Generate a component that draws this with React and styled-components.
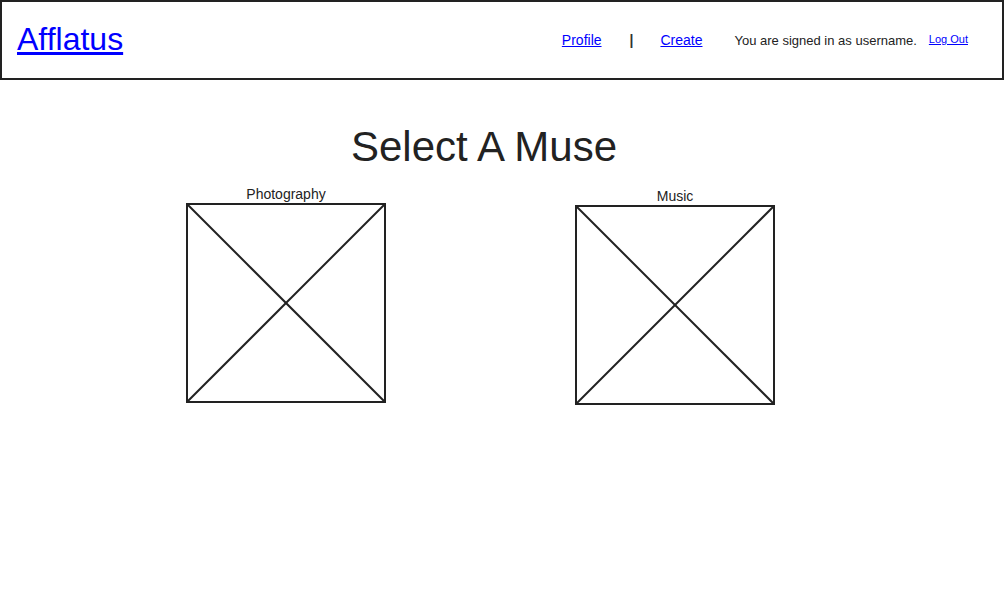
import React from 'react';
import styled, { createGlobalStyle } from 'styled-components';

const Global = createGlobalStyle`
body{
  margin:0;
  background:#ffffff;
  font-family:"Liberation Sans", Arial, sans-serif;
  color:#222222;
}
`

const Header = styled.header`
box-sizing:border-box;
height:80px;
width:1004px;
border:2px solid #222222;
display:flex;
align-items:center;
justify-content:space-between;
padding:0 34px 0 15px;
`
const Brand = styled.a`
color:#0000ff;
font-size:32px;
text-decoration:underline;
margin-top:-2px;
`
const Nav = styled.nav`
display:flex;
align-items:center;
font-size:14px;
`
const NavLink = styled.a`
color:#0000ff;
text-decoration:underline;
font-size:${p => p.small ? '11px' : '14px'};
margin-top:${p => p.small ? '-3px' : '0'};
`
const Bar = styled.span`
font-weight:bold;
margin:0 27px 0 28px;
color:#333333;
`
const Signed = styled.span`
font-size:13px;
margin:0 12px 0 32px;
color:#222222;
`
const Main = styled.main`
width:968px;
`
const Title = styled.h1`
margin:43px 0 0 0;
font-size:42px;
line-height:48px;
font-weight:normal;
text-align:center;
color:#222222;
`
const Row = styled.div`
display:flex;
gap:189px;
padding-left:186px;
margin-top:15px;
`
const Card = styled.div`
display:flex;
flex-direction:column;
align-items:center;
width:200px;
margin-top:${p => p.drop ? '2px' : '0'};
`
const Label = styled.span`
font-size:14px;
line-height:16px;
margin-bottom:1px;
`

const Placeholder = () => (
  <svg width="200" height="200" viewBox="0 0 200 200">
    <rect x="1" y="1" width="198" height="198" fill="#ffffff" stroke="#222222" strokeWidth="2" />
    <line x1="1" y1="1" x2="199" y2="199" stroke="#222222" strokeWidth="2" />
    <line x1="199" y1="1" x2="1" y2="199" stroke="#222222" strokeWidth="2" />
  </svg>
)

export default function App() {
  return (
    <div>
      <Global />
      <Header>
        <Brand href="#">Afflatus</Brand>
        <Nav>
          <NavLink href="#">Profile</NavLink>
          <Bar>|</Bar>
          <NavLink href="#">Create</NavLink>
          <Signed>You are signed in as username.</Signed>
          <NavLink small href="#">Log Out</NavLink>
        </Nav>
      </Header>
      <Main>
        <Title>Select A Muse</Title>
        <Row>
          <Card>
            <Label>Photography</Label>
            <Placeholder />
          </Card>
          <Card drop>
            <Label>Music</Label>
            <Placeholder />
          </Card>
        </Row>
      </Main>
    </div>
  );
}
